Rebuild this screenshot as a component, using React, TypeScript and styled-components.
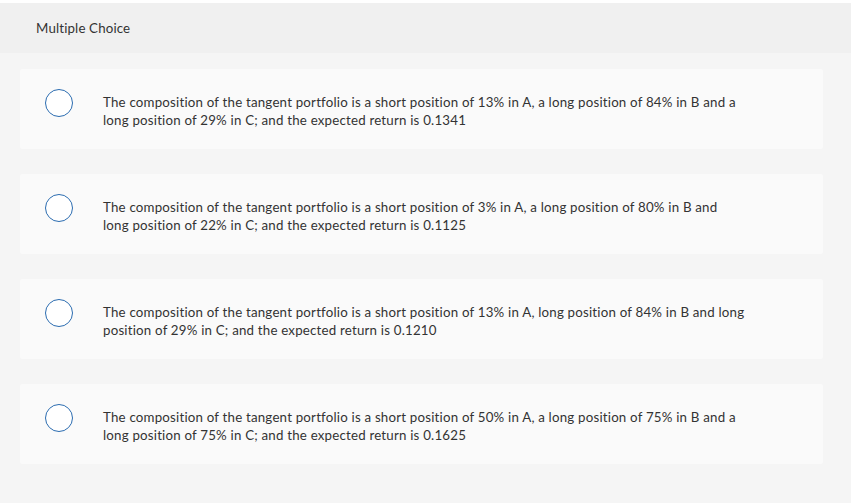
import styled, { createGlobalStyle } from 'styled-components';

type Choice = {
    id: number;
    lines: [string, string];
};

const choices: Choice[] = [
    {
        id: 1,
        lines: [
            'The composition of the tangent portfolio is a short position of 13% in A, a long position of 84% in B and a',
            'long position of 29% in C; and the expected return is 0.1341',
        ],
    },
    {
        id: 2,
        lines: [
            'The composition of the tangent portfolio is a short position of 3% in A, a long position of 80% in B and',
            'long position of 22% in C; and the expected return is 0.1125',
        ],
    },
    {
        id: 3,
        lines: [
            'The composition of the tangent portfolio is a short position of 13% in A, long position of 84% in B and long',
            'position of 29% in C; and the expected return is 0.1210',
        ],
    },
    {
        id: 4,
        lines: [
            'The composition of the tangent portfolio is a short position of 50% in A, a long position of 75% in B and a',
            'long position of 75% in C; and the expected return is 0.1625',
        ],
    },
];

const GlobalStyle = createGlobalStyle`
    html, body {
        margin: 0;
        padding: 0;
        background: #ffffff;
    }
    body {
        font-family: Lato, "Open Sans", Arial, sans-serif;
        color: #333333;
    }
`;

function App() {
    return (
        <>
            <GlobalStyle />
            <Page>
                <Panel>
                    <Header>Multiple Choice</Header>
                    <Body>
                        {choices.map((c) => (
                            <Card key={c.id}>
                                <Radio />
                                <Label>
                                    {c.lines[0]}
                                    <br />
                                    {c.lines[1]}
                                </Label>
                            </Card>
                        ))}
                    </Body>
                </Panel>
            </Page>
        </>
    );
}

export default App;

const Page = styled.div`
    padding: 3px 17px 0 0;
    height: 503px;
    box-sizing: border-box;
`;

const Panel = styled.div`
    height: 100%;
    display: flex;
    flex-direction: column;
    background-color: #f5f5f5;
`;

const Header = styled.div`
    height: 50px;
    flex-shrink: 0;
    display: flex;
    align-items: center;
    padding-left: 36px;
    background-color: #f0f0f0;
    font-size: 13.3px;
    letter-spacing: 0.15px;
    color: #333333;
`;

const Body = styled.div`
    display: flex;
    flex-direction: column;
    gap: 25px;
    padding: 16px 28px 0 20px;
`;

const Card = styled.div`
    height: 80px;
    box-sizing: border-box;
    display: flex;
    align-items: flex-start;
    padding: 20px 0 0 25px;
    border-radius: 2px;
    background-color: #fafafa;
`;

const Radio = styled.span`
    width: 28px;
    height: 28px;
    box-sizing: border-box;
    flex-shrink: 0;
    border-radius: 50%;
    border: 1.5px solid #2b6cb0;
    background: #ffffff;
    margin-right: 30px;
`;

const Label = styled.div`
    margin-top: 4px;
    font-size: 13.3px;
    line-height: 18px;
    letter-spacing: 0.2px;
    white-space: nowrap;
    color: #333333;
`;
